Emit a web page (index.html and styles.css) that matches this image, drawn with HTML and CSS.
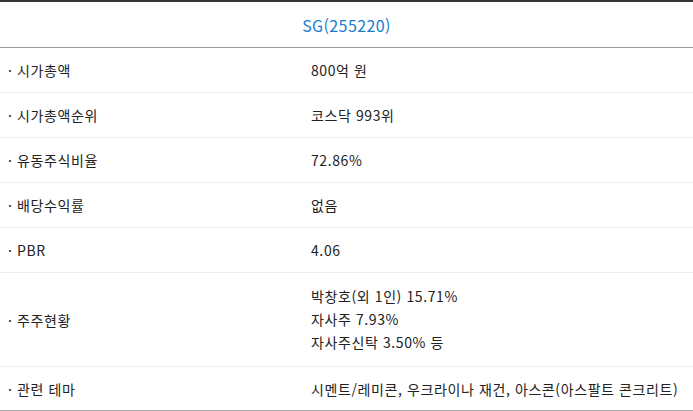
FILE: index.html
```html
<!DOCTYPE html>
<html lang="ko">
<head>
<meta charset="utf-8">
<title>SG(255220)</title>
<link rel="stylesheet" href="styles.css">
</head>
<body>
<div class="info">
  <div class="info-head">SG(255220)</div>
  <div class="row"><div class="label">· 시가총액</div><div class="value">800억 원</div></div>
  <div class="row"><div class="label">· 시가총액순위</div><div class="value">코스닥 993위</div></div>
  <div class="row"><div class="label">· 유동주식비율</div><div class="value">72.86%</div></div>
  <div class="row"><div class="label">· 배당수익률</div><div class="value">없음</div></div>
  <div class="row"><div class="label">· PBR</div><div class="value">4.06</div></div>
  <div class="row row-tall"><div class="label">· 주주현황</div><div class="value multi"><span>박창호(외 1인) 15.71%</span><span>자사주 7.93%</span><span>자사주신탁 3.50% 등</span></div></div>
  <div class="row row-last"><div class="label">· 관련 테마</div><div class="value">시멘트/레미콘, 우크라이나 재건, 아스콘(아스팔트 콘크리트)</div></div>
</div>
</body>
</html>
```
FILE: styles.css
```css
html, body {
  margin: 0;
  padding: 0;
  background: #fff;
}
body {
  font-family: "Noto Sans CJK KR", "Noto Sans", sans-serif;
  font-size: 14px;
  color: #222;
  letter-spacing: 0.6px;
}
.info {
  width: 693px;
  border-top: 2px solid #333;
  border-bottom: 1px solid #aaa;
}
.info-head {
  height: 45px;
  display: flex;
  align-items: center;
  justify-content: center;
  color: #1a7bd0;
  font-size: 16px;
  letter-spacing: 0.4px;
  border-bottom: 1px solid #999;
}
.row {
  display: grid;
  grid-template-columns: 300px 1fr;
  height: 44px;
  border-bottom: 1px solid #eee;
  align-items: center;
}
.row-tall {
  height: 93px;
}
.row-last {
  height: 43px;
  border-bottom: none;
}
.label {
  padding-left: 8px;
}
.value {
  padding-left: 11px;
}
.multi {
  display: flex;
  flex-direction: column;
  line-height: 23px;
}
```
